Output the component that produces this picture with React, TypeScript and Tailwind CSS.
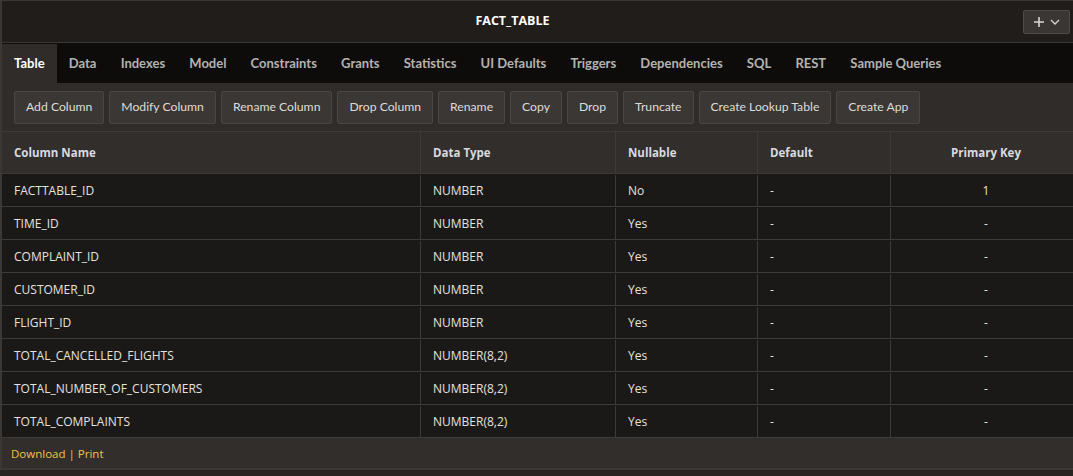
import React from "react";

const tabs = ["Table","Data","Indexes","Model","Constraints","Grants","Statistics","UI Defaults","Triggers","Dependencies","SQL","REST","Sample Queries"];
const buttons = ["Add Column","Modify Column","Rename Column","Drop Column","Rename","Copy","Drop","Truncate","Create Lookup Table","Create App"];
const rows: [string,string,string,string,string][] = [
  ["FACTTABLE_ID","NUMBER","No","-","1"],
  ["TIME_ID","NUMBER","Yes","-","-"],
  ["COMPLAINT_ID","NUMBER","Yes","-","-"],
  ["CUSTOMER_ID","NUMBER","Yes","-","-"],
  ["FLIGHT_ID","NUMBER","Yes","-","-"],
  ["TOTAL_CANCELLED_FLIGHTS","NUMBER(8,2)","Yes","-","-"],
  ["TOTAL_NUMBER_OF_CUSTOMERS","NUMBER(8,2)","Yes","-","-"],
  ["TOTAL_COMPLAINTS","NUMBER(8,2)","Yes","-","-"],
];

export default function App() {
  return (
    <div className="w-[1073px] h-[476px] overflow-hidden bg-[#272422] text-[12px] text-[#e8e6e3]" style={{ fontFamily: '"Open Sans", "Noto Sans", sans-serif' }}>
      <div className="border-l-2 border-t border-[#3a3734] flex flex-col">
        {/* header */}
        <div className="h-[42px] bg-[#201d1b] flex items-center border-b border-[#3a3734]">
          <div className="flex-1 text-center font-bold text-white text-[12.5px]">FACT_TABLE</div>
          <div className="mr-[3px] w-[47px] h-[24px] rounded-[2px] border border-[#4f4b47] bg-[#3a3633] flex items-center justify-center gap-[5px] text-[#d8d6d3]">
            <svg width="12" height="12" viewBox="0 0 12 12"><path d="M6 1v10M1 6h10" stroke="currentColor" strokeWidth="1.6" /></svg>
            <svg width="10" height="6" viewBox="0 0 10 6"><path d="M1 1l4 4 4-4" stroke="currentColor" strokeWidth="1.3" fill="none" /></svg>
          </div>
        </div>
        {/* tabs */}
        <div className="h-[40px] bg-[#0e0c0b] flex pt-[1px]" style={{ fontFamily: 'Lato, "Open Sans", sans-serif' }}>
          {tabs.map((t, i) => (
            <div key={t} className={`h-full flex items-center px-[12.1px] font-bold text-[13px] ${i === 0 ? "bg-[#2f2c29] text-white" : "text-[#b4b2af]"}`}>{t}</div>
          ))}
        </div>
        {/* toolbar */}
        <div className="h-[48px] bg-[#2f2c29] flex items-center gap-[5px] px-3 pt-[1px]" style={{ fontFamily: 'Lato, "Open Sans", sans-serif' }}>
          {buttons.map((b) => (
            <div key={b} className="h-[33px] px-[11px] flex items-center rounded-[2px] border border-[#4a4643] bg-[#3b3734] text-[#dedcd9] text-[12.2px]">{b}</div>
          ))}
        </div>
        {/* table */}
        <div className="border-t border-[#3d3a37]">
          <div className="grid grid-cols-[419px_195px_142px_133px_1fr] h-[42px] bg-[#322e2b] border-b border-[#3d3a37] font-bold text-[11.5px] text-[#d7dae0]">
            <div className="flex items-center pl-3 border-r border-[#3d3a37]">Column Name</div>
            <div className="flex items-center pl-3 border-r border-[#3d3a37]">Data Type</div>
            <div className="flex items-center pl-3 border-r border-[#3d3a37]">Nullable</div>
            <div className="flex items-center pl-3 border-r border-[#3d3a37]">Default</div>
            <div className="flex items-center justify-center pl-2">Primary Key</div>
          </div>
          {rows.map((r) => (
            <div key={r[0]} className="grid grid-cols-[419px_195px_142px_133px_1fr] h-[33px] bg-[#1b1918] border-b border-[#3d3a37] text-[#e4e2df] pt-[1px]">
              <div className="flex items-center pl-3 border-r border-[#3d3a37]">{r[0]}</div>
              <div className="flex items-center pl-3 border-r border-[#3d3a37]">{r[1]}</div>
              <div className="flex items-center pl-3 border-r border-[#3d3a37]">{r[2]}</div>
              <div className="flex items-center pl-3 border-r border-[#3d3a37]">{r[3]}</div>
              <div className="flex items-center justify-center pl-2">{r[4]}</div>
            </div>
          ))}
        </div>
        {/* footer */}
        <div className="h-[32px] bg-[#312e2b] flex items-center pl-[9px] pt-[1px] text-[11.5px] text-[#f2c14e] border-b-2 border-[#3a3734]">
          <span>Download</span><span className="mx-[3px]">|</span><span>Print</span>
        </div>
      </div>
    </div>
  );
}
